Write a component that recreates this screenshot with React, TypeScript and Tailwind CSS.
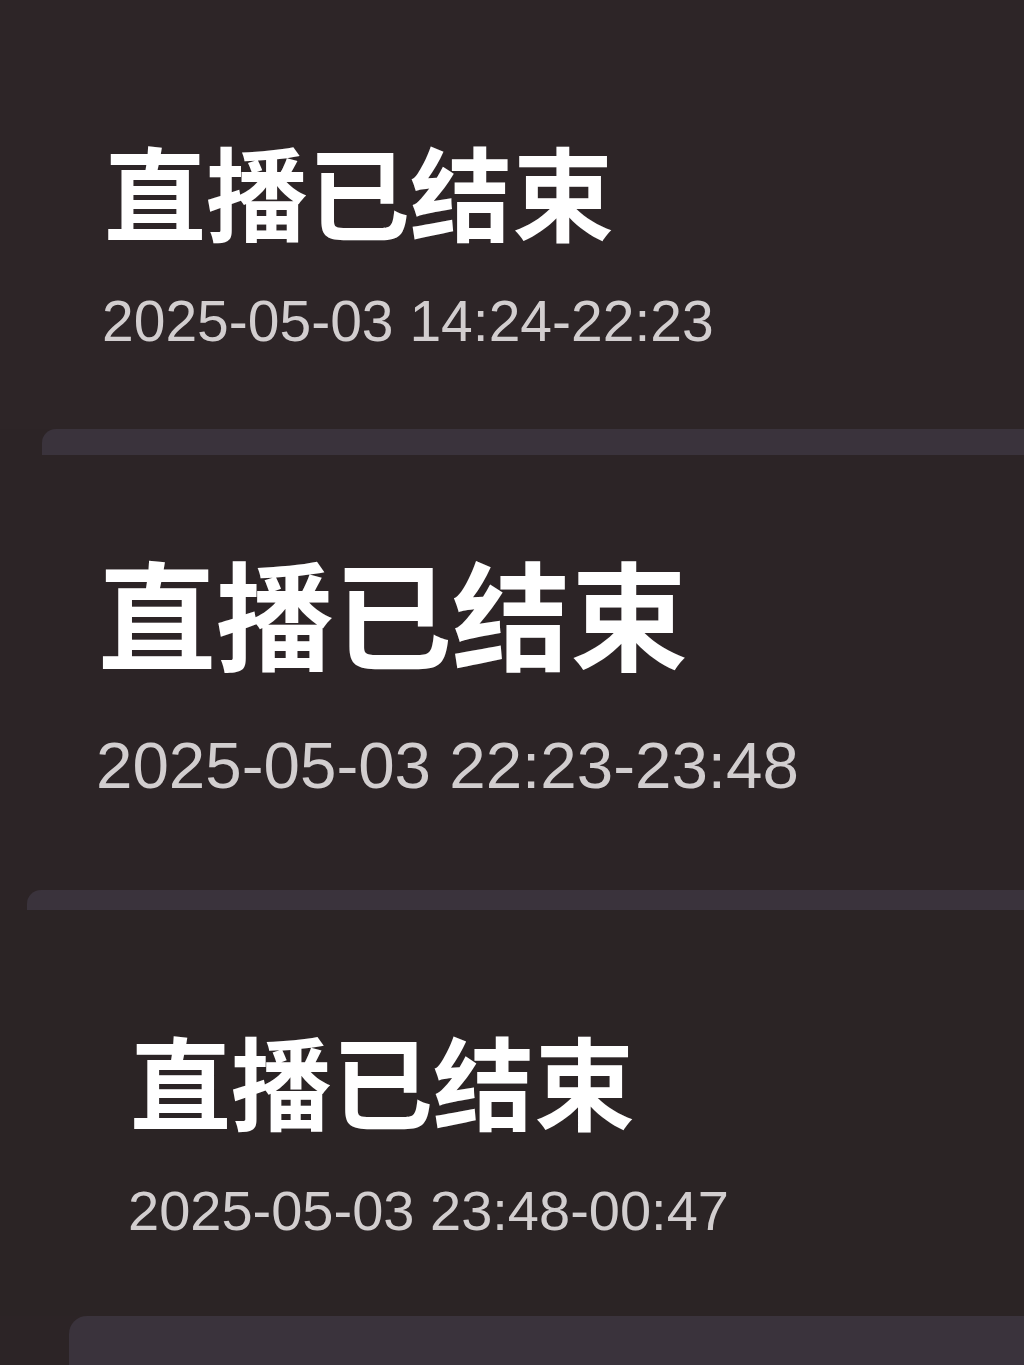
import React from "react";

const cjk = { fontFamily: '"Noto Sans CJK SC", "Noto Sans", sans-serif' };
const num = { fontFamily: '"Liberation Sans", Arial, sans-serif' };

export default function App() {
  return (
    <div className="w-[1024px] h-[1365px] overflow-hidden bg-[#2c2426] flex flex-col">
      {/* Section 1 */}
      <div className="h-[429px] flex flex-col pt-[139px] bg-[#2d2527]">
        <div className="pl-[104px] h-[102px] text-[102px] leading-none font-semibold text-white" style={cjk}>
          直播已结束
        </div>
        <div className="pl-[102px] mt-[52px] text-[57px] leading-none text-[#d2cecf]" style={num}>
          2025-05-03 14:24-22:23
        </div>
      </div>
      <div className="h-[26px] ml-[42px] rounded-tl-[14px] bg-[#3a333c]" />

      {/* Section 2 */}
      <div className="h-[435px] flex flex-col pt-[97px] bg-[#2c2426]">
        <div className="pl-[98px] h-[118px] text-[118px] leading-none font-semibold text-white" style={cjk}>
          直播已结束
        </div>
        <div className="pl-[96px] mt-[63px] text-[65.5px] leading-none text-[#d2cecf]" style={num}>
          2025-05-03 22:23-23:48
        </div>
      </div>
      <div className="h-[20px] ml-[27px] rounded-tl-[14px] bg-[#3a333c]" />

      {/* Section 3 */}
      <div className="h-[406px] flex flex-col pt-[119px] bg-[#2b2425]">
        <div className="pl-[130px] h-[101px] text-[101px] leading-none font-semibold text-white" style={cjk}>
          直播已结束
        </div>
        <div className="pl-[128px] mt-[53px] text-[56px] leading-none text-[#d2cecf]" style={num}>
          2025-05-03 23:48-00:47
        </div>
      </div>
      <div className="flex-1 ml-[69px] rounded-tl-[18px] bg-[#3a333c]" />
    </div>
  );
}
